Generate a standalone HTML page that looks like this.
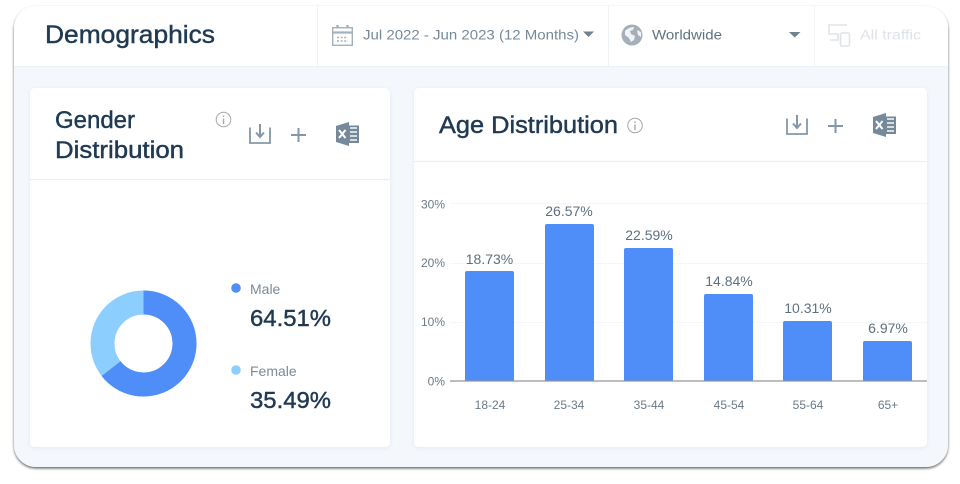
<!DOCTYPE html>
<html><head><meta charset="utf-8">
<style>
html,body{margin:0;padding:0;background:#fff;width:960px;height:484px;overflow:hidden}
svg{display:block;filter:blur(.35px)}
text{font-family:"Liberation Sans",sans-serif}
.b{stroke:#1f3a52;stroke-width:.45px}
</style></head>
<body>
<svg width="960" height="484" viewBox="0 0 960 484" xmlns="http://www.w3.org/2000/svg">
<defs>
<filter id="fs" x="-5%" y="-5%" width="110%" height="110%"><feDropShadow dx="0" dy="1.500" stdDeviation="1.200" flood-color="#000" flood-opacity=".6"/></filter>
<filter id="cs" x="-5%" y="-5%" width="110%" height="110%"><feDropShadow dx="0" dy="1" stdDeviation="2.500" flood-color="#8aa0b8" flood-opacity=".16"/></filter>
<clipPath id="fc"><rect x="14" y="6" width="934" height="461" rx="22"/></clipPath>
<g id="tools" fill="none" stroke="#8497a8">
<path d="M-10 -8V7.500H10V-8" stroke-width="1.800"/>
<path d="M0 -11.500V1M-4 -3L0 1.500L4 -3" stroke-width="2"/>
<path d="M31 -.500H46M38.500 -7.500V6.500" stroke-width="2"/>
<path d="M76 -9.500L89 -13.500V10.500L76 6.500Z" fill="#75899b" stroke="none"/>
<rect x="88" y="-10" width="11" height="17.500" fill="#75899b" stroke="none"/>
<path d="M90 -7.500H97M90 -3.500H97M90 .500H97M90 4.500H97" stroke="#e4e9ed" stroke-width="1.700"/>
<path d="M79 -5.500L85.500 2.500M85.500 -5.500L79 2.500" stroke="#fff" stroke-width="2"/>
</g>
</defs>

<rect x="14" y="6" width="934" height="461" rx="22" fill="#f4f8fc" filter="url(#fs)"/>
<g clip-path="url(#fc)">
<rect x="14" y="6" width="934" height="60" fill="#fff"/>
<path d="M14 66.500H948" stroke="#eef1f5"/>
<path d="M317.500 6V66M608.500 6V66M814.500 6V66" stroke="#f0f2f5"/>
</g>

<text x="45" y="43" class="b" font-size="25" fill="#1f3a52" textLength="170" lengthAdjust="spacingAndGlyphs">Demographics</text>

<!-- calendar -->
<g fill="none" stroke="#a4b1be" stroke-width="1.400">
<rect x="332.700" y="27.700" width="19.600" height="17.600"/>
<path d="M333 32.500H352" stroke-width="2.200"/>
<path d="M337.500 25V28.500M347.500 25V28.500" stroke-width="2.400"/>
<path d="M337 37.500H348M337 41H348" stroke-width="1.500" stroke-dasharray="2 1.600"/>
</g>
<text x="363" y="39.500" font-size="14" fill="#76899b" textLength="216" lengthAdjust="spacingAndGlyphs">Jul 2022 - Jun 2023 (12 Months)</text>
<path d="M583 31.500H594L588.500 37Z" fill="#71828f"/>

<!-- globe -->
<circle cx="632" cy="35" r="10.500" fill="#a4afb9"/>
<path d="M625 31C628 28 631 27 634 27L633 30L630 31L631 34L635 36L634 40L631 42L629 38L625 35Z" fill="#fff" opacity=".85"/>
<path d="M637 30L641 32L641 37L638 35Z" fill="#fff" opacity=".85"/>
<text x="652" y="39.500" font-size="14" fill="#5f7283" textLength="70" lengthAdjust="spacingAndGlyphs">Worldwide</text>
<path d="M789 32H800.500L794.700 37.500Z" fill="#71828f"/>

<!-- traffic -->
<g fill="none" stroke="#e0e4e8" stroke-width="1.600">
<path d="M847 25H829V34H838V40H830"/>
<rect x="840.500" y="33" width="9" height="13" rx="1.500"/>
</g>
<text x="860" y="39.500" font-size="14" fill="#dfe3e7" textLength="61" lengthAdjust="spacingAndGlyphs">All traffic</text>

<!-- gender card -->
<rect x="30" y="88" width="360" height="359" rx="5" fill="#fff" filter="url(#cs)"/>
<path d="M30 179.500H390" stroke="#eceff3" stroke-width="1.200"/>
<text x="55" y="128" class="b" font-size="24" fill="#1f3a52" textLength="80" lengthAdjust="spacingAndGlyphs">Gender</text>
<text x="55" y="158" class="b" font-size="24" fill="#1f3a52" textLength="129" lengthAdjust="spacingAndGlyphs">Distribution</text>
<g fill="none" stroke="#a8a8a8" stroke-width="1"><circle cx="223.500" cy="119.500" r="7.300"/><path d="M223.500 118.500V124M223.500 115.500V117" stroke-width="1.400"/></g>
<use href="#tools" x="260" y="135.500"/>

<!-- donut -->
<circle cx="143.500" cy="343.500" r="41" fill="none" stroke="#8ccfff" stroke-width="24"/>
<circle cx="143.500" cy="343.500" r="41" fill="none" stroke="#4f8df9" stroke-width="24" pathLength="100" stroke-dasharray="64.51 35.49" transform="rotate(-90 143.500 343.500)"/>

<circle cx="236" cy="288" r="4.800" fill="#4f8df9"/>
<text x="250" y="294" font-size="14" fill="#7c8a97">Male</text>
<text x="250" y="326" class="b" font-size="23.500" fill="#1f3a52" textLength="81" lengthAdjust="spacingAndGlyphs">64.51%</text>
<circle cx="236" cy="370" r="4.800" fill="#8ccfff"/>
<text x="250" y="376" font-size="14" fill="#7c8a97">Female</text>
<text x="250" y="408" class="b" font-size="23.500" fill="#1f3a52" textLength="81" lengthAdjust="spacingAndGlyphs">35.49%</text>

<!-- age card -->
<rect x="414" y="88" width="513" height="359" rx="5" fill="#fff" filter="url(#cs)"/>
<path d="M414 161.500H927" stroke="#eceff3" stroke-width="1.200"/>
<text x="439" y="133" class="b" font-size="24" fill="#1f3a52" textLength="179" lengthAdjust="spacingAndGlyphs">Age Distribution</text>
<g fill="none" stroke="#a8a8a8" stroke-width="1"><circle cx="635" cy="125.500" r="7.300"/><path d="M635 124.500V130M635 121.500V123" stroke-width="1.400"/></g>
<use href="#tools" x="797" y="126.500"/>

<!-- chart -->
<path d="M450 203.500H927M450 263.500H927M450 322.500H927" stroke="#f5f6f8"/>
<g font-size="12" fill="#6c7a87" text-anchor="end">
<text x="445" y="208.500">30%</text><text x="445" y="267">20%</text><text x="445" y="326">10%</text><text x="445" y="385.500">0%</text>
</g>
<g fill="#4f8df9">
<path d="M465 381V273a2 2 0 0 1 2-2H512a2 2 0 0 1 2 2V381Z"/>
<path d="M545 381V226a2 2 0 0 1 2-2H592a2 2 0 0 1 2 2V381Z"/>
<path d="M624 381V250a2 2 0 0 1 2-2H671a2 2 0 0 1 2 2V381Z"/>
<path d="M704 381V296a2 2 0 0 1 2-2H751a2 2 0 0 1 2 2V381Z"/>
<path d="M783 381V323a2 2 0 0 1 2-2H830a2 2 0 0 1 2 2V381Z"/>
<path d="M863 381V343a2 2 0 0 1 2-2H910a2 2 0 0 1 2 2V381Z"/>
</g>
<path d="M450 381H927" stroke="#8f979e" stroke-width="1.300"/>
<g font-size="14" fill="#5f7080" text-anchor="middle">
<text x="489.500" y="264">18.73%</text>
<text x="569" y="216">26.57%</text>
<text x="649" y="240">22.59%</text>
<text x="729" y="286">14.84%</text>
<text x="808" y="313">10.31%</text>
<text x="888" y="333">6.97%</text>
</g>
<g font-size="12" fill="#6c7a87" text-anchor="middle">
<text x="490" y="409">18-24</text>
<text x="569" y="409">25-34</text>
<text x="649" y="409">35-44</text>
<text x="729" y="409">45-54</text>
<text x="808" y="409">55-64</text>
<text x="888" y="409">65+</text>
</g>
</svg>
</body></html>
